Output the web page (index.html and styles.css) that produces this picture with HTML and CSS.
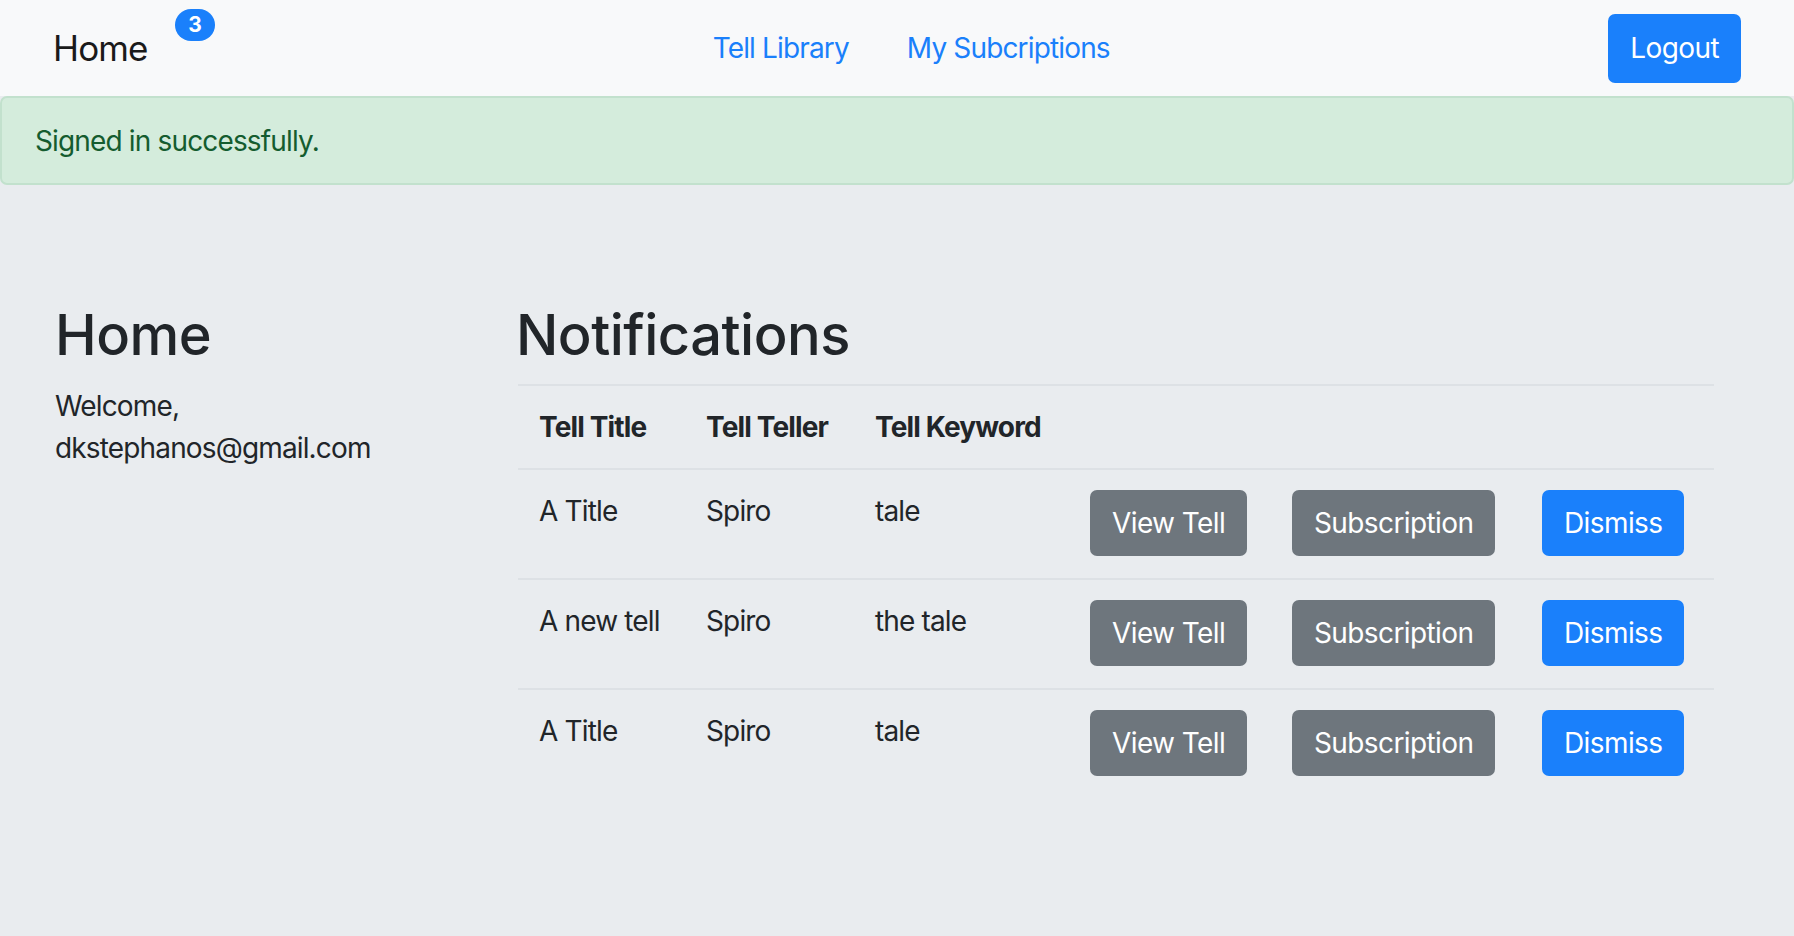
FILE: index.html
```html
<!DOCTYPE html>
<html lang="en">
<head>
<meta charset="utf-8">
<title>Home</title>
<link rel="stylesheet" href="styles.css">
</head>
<body>
<nav class="navbar">
  <a class="brand" href="#">Home<span class="badge">3</span></a>
  <div class="nav-links">
    <a class="nav-link" href="#">Tell Library</a>
    <a class="nav-link" href="#">My Subcriptions</a>
  </div>
  <button class="btn btn-primary logout">Logout</button>
</nav>
<div class="alert">Signed in successfully.</div>
<main class="main">
  <section class="side">
    <h2 class="title">Home</h2>
    <p class="welcome">Welcome,<br>dkstephanos@gmail.com</p>
  </section>
  <section class="content">
    <h2 class="title">Notifications</h2>
    <table class="table">
      <colgroup>
        <col class="c-title"><col class="c-teller"><col class="c-keyword"><col class="c-view"><col class="c-sub"><col class="c-dismiss">
      </colgroup>
      <thead>
        <tr><th>Tell Title</th><th>Tell Teller</th><th>Tell Keyword</th><th></th><th></th><th></th></tr>
      </thead>
      <tbody>
        <tr><td>A Title</td><td>Spiro</td><td>tale</td><td><button class="btn btn-secondary">View Tell</button></td><td><button class="btn btn-secondary">Subscription</button></td><td><button class="btn btn-primary">Dismiss</button></td></tr>
        <tr><td>A new tell</td><td>Spiro</td><td>the tale</td><td><button class="btn btn-secondary">View Tell</button></td><td><button class="btn btn-secondary">Subscription</button></td><td><button class="btn btn-primary">Dismiss</button></td></tr>
        <tr><td>A Title</td><td>Spiro</td><td>tale</td><td><button class="btn btn-secondary">View Tell</button></td><td><button class="btn btn-secondary">Subscription</button></td><td><button class="btn btn-primary">Dismiss</button></td></tr>
      </tbody>
    </table>
  </section>
</main>
</body>
</html>
```
FILE: styles.css
```css
* { box-sizing: border-box; }
html, body { margin: 0; }
body {
  background: #e9ecef;
  color: #212529;
  font-family: Inter, "Noto Sans", "Liberation Sans", sans-serif;
  font-size: 28px;
  line-height: 1.5;
  letter-spacing: -0.85px;
  min-height: 936px;
}
.navbar {
  height: 96px;
  background: #f8f9fa;
  display: flex;
  align-items: center;
  padding: 0 53px 0 53px;
}
.brand {
  position: relative;
  font-size: 35px;
  color: #1a1a1a;
  text-decoration: none;
  line-height: 1.5;
}
.badge {
  position: absolute;
  left: 122px;
  top: -13px;
  width: 40px;
  height: 32px;
  border-radius: 16px;
  background: #1a80fb;
  color: #fff;
  font-size: 21px;
  font-weight: 700;
  letter-spacing: 0;
  line-height: 32px;
  text-align: center;
}
.nav-links {
  display: flex;
  gap: 58px;
  margin-left: 565px;
}
.nav-link {
  color: #1a80fb;
  text-decoration: none;
}
.btn {
  font-family: inherit;
  font-size: 28px;
  letter-spacing: -0.6px;
  line-height: 1.5;
  color: #fff;
  border: 0;
  border-radius: 7px;
  height: 66px;
  padding: 0 22px;
  cursor: pointer;
}
.btn-primary { background: #1a80fb; }
.btn-secondary { background: #6e767d; }
.logout {
  margin-left: auto;
  height: 69px;
  padding: 0 22px;
}
.alert {
  height: 89px;
  background: #d4ecdc;
  border: 2px solid #c2e1cd;
  border-radius: 7px;
  color: #145c2f;
  display: flex;
  align-items: center;
  padding-left: 33px;
}
.main {
  display: grid;
  grid-template-columns: 463px 1196px;
  padding: 117px 0 0 55px;
}
.title {
  font-size: 56px;
  font-weight: 500;
  letter-spacing: -0.5px;
  line-height: 1.2;
  margin: 0 0 16px;
}
.content .title { margin: 0 0 15px -2px; }
.welcome { margin: 0; }
.table {
  width: 1196px;
  border-collapse: collapse;
  table-layout: fixed;
}
.c-title { width: 167px; }
.c-teller { width: 169px; }
.c-keyword { width: 215px; }
.c-view { width: 202px; }
.c-sub { width: 250px; }
.c-dismiss { width: 193px; }
.table th {
  text-align: left;
  font-weight: 700;
  white-space: nowrap;
  padding: 20px 21px;
  border-top: 2px solid #dde1e5;
  border-bottom: 2px solid #dde1e5;
}
.table td {
  padding: 20px 21px 22px;
  vertical-align: top;
  border-bottom: 2px solid #dde1e5;
  white-space: nowrap;
}
.table td .btn { display: block; }
.table tbody tr:last-child td { border-bottom: 0; }
```
